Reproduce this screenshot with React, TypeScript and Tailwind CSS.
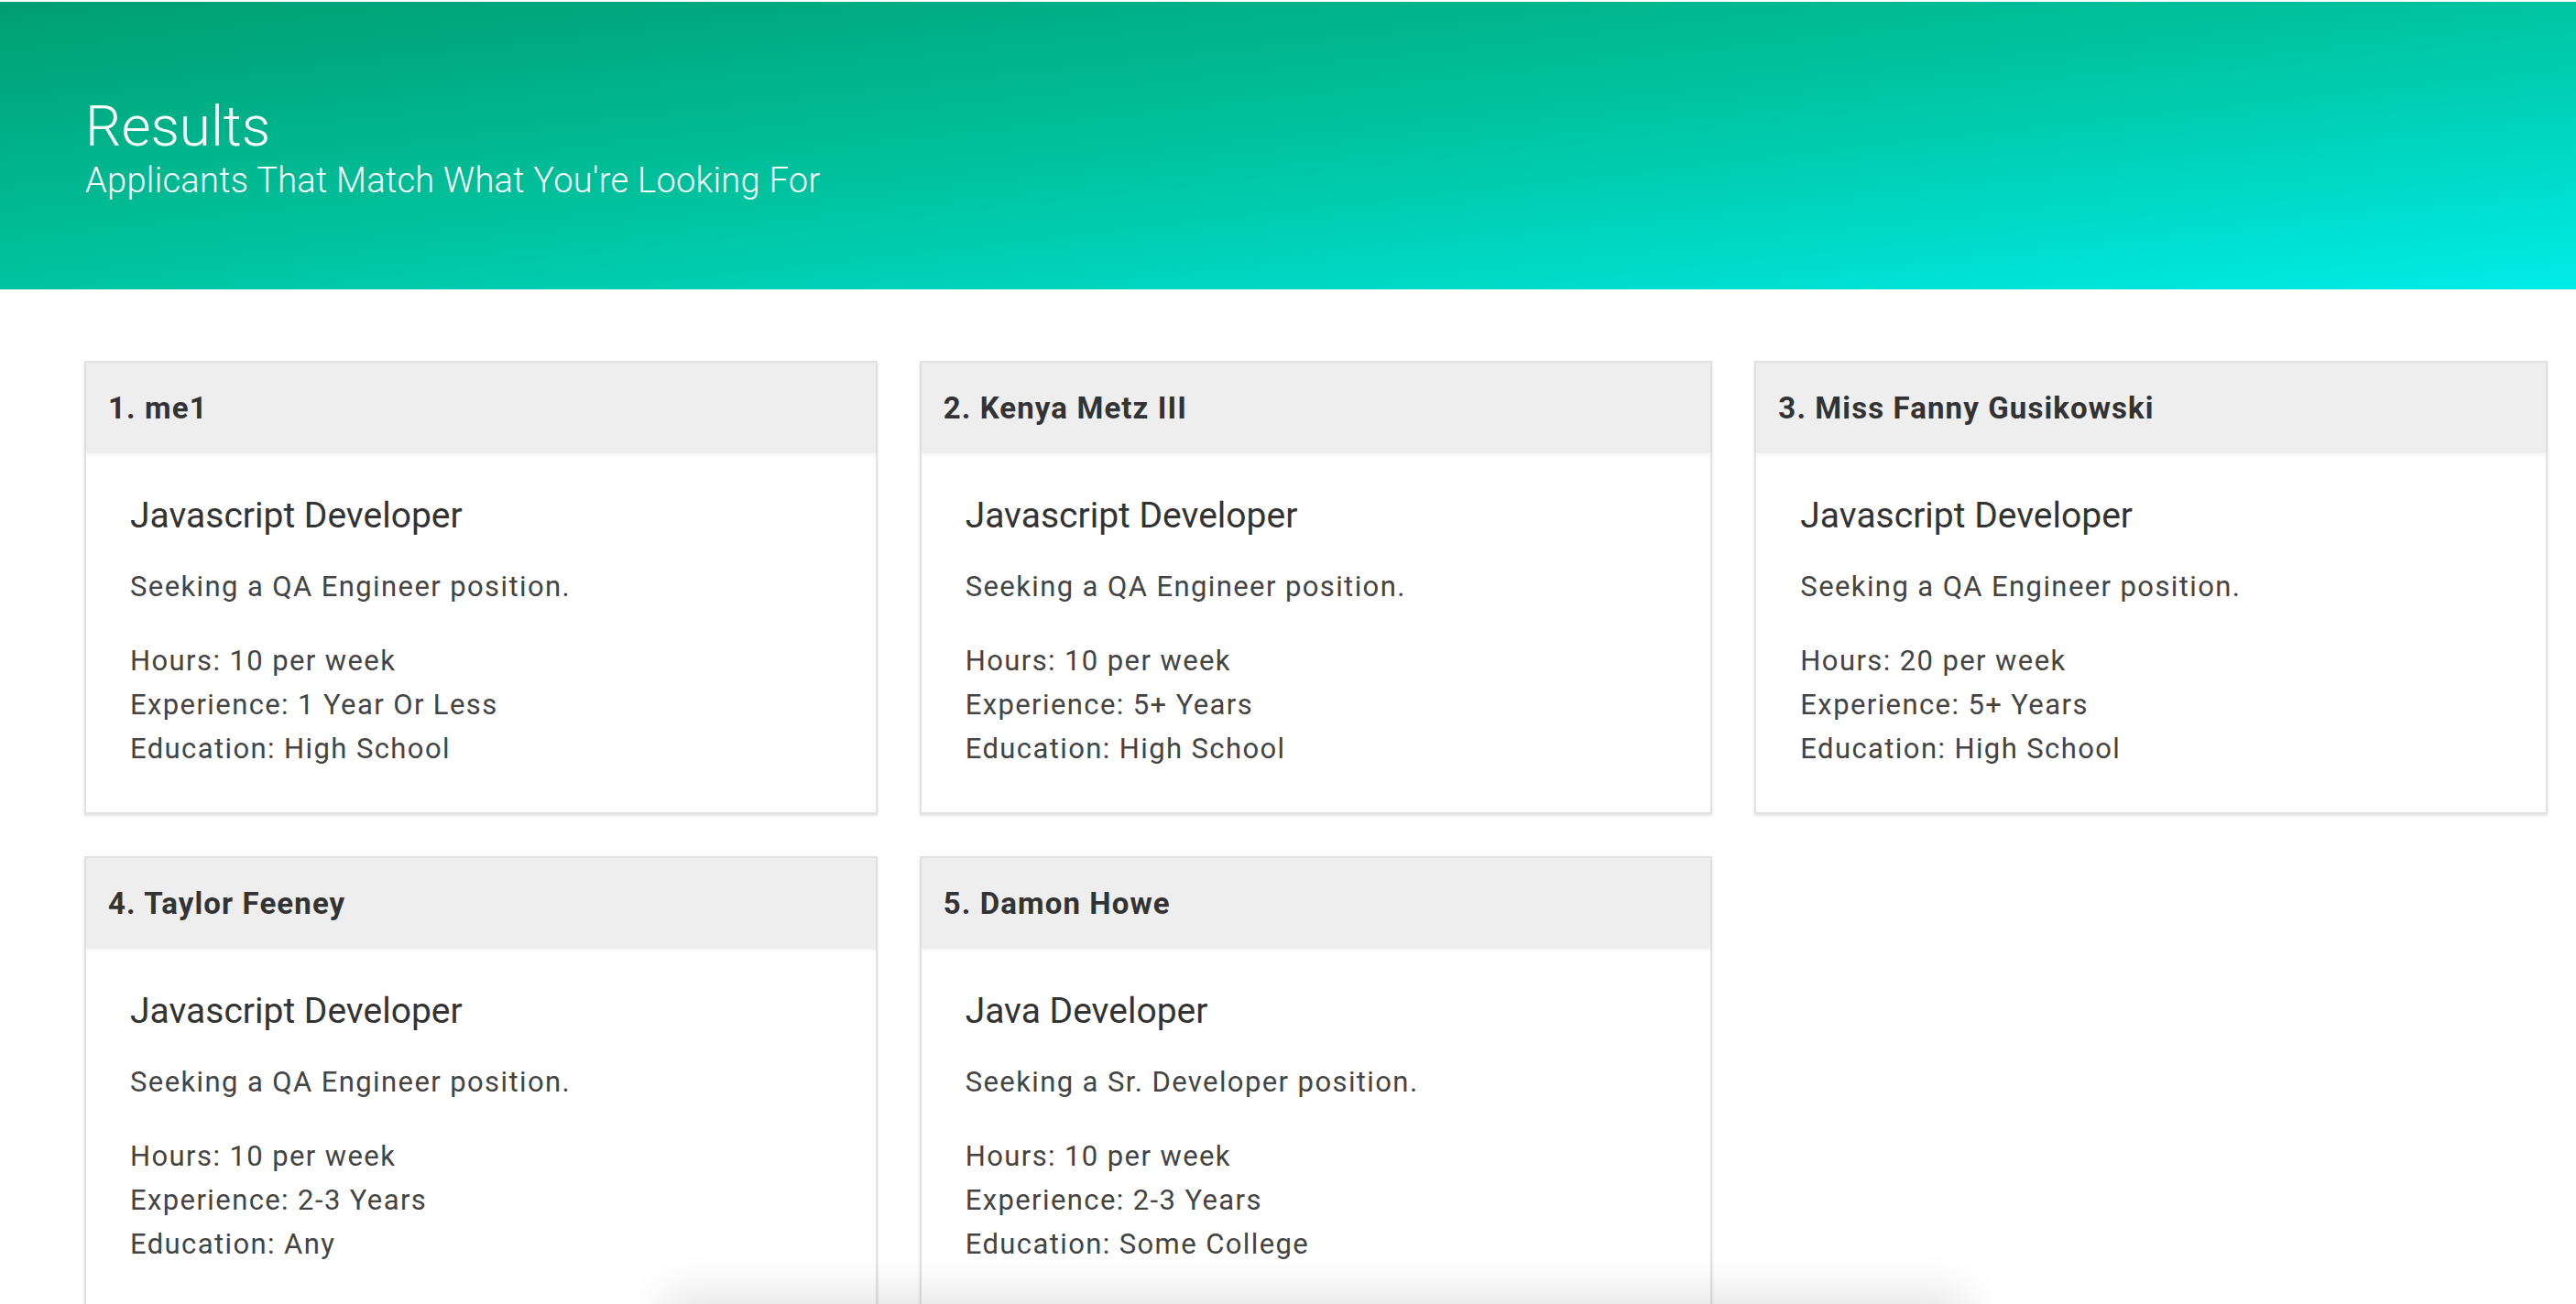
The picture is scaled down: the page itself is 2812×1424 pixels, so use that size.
import React from "react";

interface Applicant {
  name: string;
  title: string;
  seeking: string;
  hours: number;
  experience: string;
  education: string;
}

const applicants: Applicant[] = [
  { name: "me1", title: "Javascript Developer", seeking: "QA Engineer", hours: 10, experience: "1 Year Or Less", education: "High School" },
  { name: "Kenya Metz III", title: "Javascript Developer", seeking: "QA Engineer", hours: 10, experience: "5+ Years", education: "High School" },
  { name: "Miss Fanny Gusikowski", title: "Javascript Developer", seeking: "QA Engineer", hours: 20, experience: "5+ Years", education: "High School" },
  { name: "Taylor Feeney", title: "Javascript Developer", seeking: "QA Engineer", hours: 10, experience: "2-3 Years", education: "Any" },
  { name: "Damon Howe", title: "Java Developer", seeking: "Sr. Developer", hours: 10, experience: "2-3 Years", education: "Some College" },
];

function ApplicantCard({ applicant, index }: { applicant: Applicant; index: number }) {
  return (
    <div className="bg-white border-2 border-[#e2e2e2] shadow-[0_2px_3px_rgba(0,0,0,0.12)] h-[495px]">
      {/* Kortets rubrik */}
      <div className="h-[99px] bg-[#eeeeee] shadow-[0_2px_3px_rgba(0,0,0,0.05)] flex items-center px-6">
        <h2 className="text-[33px] font-bold text-[#333] tracking-[1.1px]">
          {index + 1}. {applicant.name}
        </h2>
      </div>

      {/* Innehåll */}
      <div className="px-[48px] pt-[44px] text-[#333]">
        <h3 className="text-[39px] leading-[48px] font-normal tracking-[0px]">{applicant.title}</h3>
        <p className="mt-[30px] text-[31px] leading-[48px] tracking-[1.4px] text-[#444]">
          Seeking a {applicant.seeking} position.
        </p>
        <div className="mt-[33px] text-[31px] leading-[48px] tracking-[1.4px] text-[#444]">
          <p>Hours: {applicant.hours} per week</p>
          <p>Experience: {applicant.experience}</p>
          <p>Education: {applicant.education}</p>
        </div>
      </div>
    </div>
  );
}

export default function App() {
  return (
    <div className="min-h-screen bg-white pt-[2px] font-['Roboto','Liberation_Sans',sans-serif] relative overflow-hidden">
      {/* Header */}
      <header className="h-[314px] bg-gradient-to-br from-[#009e72] via-[#00c4a0] to-[#00ece8] pl-[93px] pt-[100px]">
        <h1 className="text-[62px] leading-[72px] font-light text-white">Results</h1>
        <p className="text-[38px] leading-[46px] font-light text-white tracking-[0.3px]">
          Applicants That Match What You're Looking For
        </p>
      </header>

      {/* Resultatlista */}
      <main className="pl-[92px] pr-[31px] pt-[78px] grid grid-cols-3 gap-[46px]">
        {applicants.map((a, i) => (
          <ApplicantCard key={a.name} applicant={a} index={i} />
        ))}
      </main>

      {/* Skugga från flytande element längst ner */}
      <div className="fixed left-[720px] right-[660px] bottom-[-60px] h-[60px] rounded-full shadow-[0_-10px_50px_rgba(0,0,0,0.12)]" />
    </div>
  );
}
